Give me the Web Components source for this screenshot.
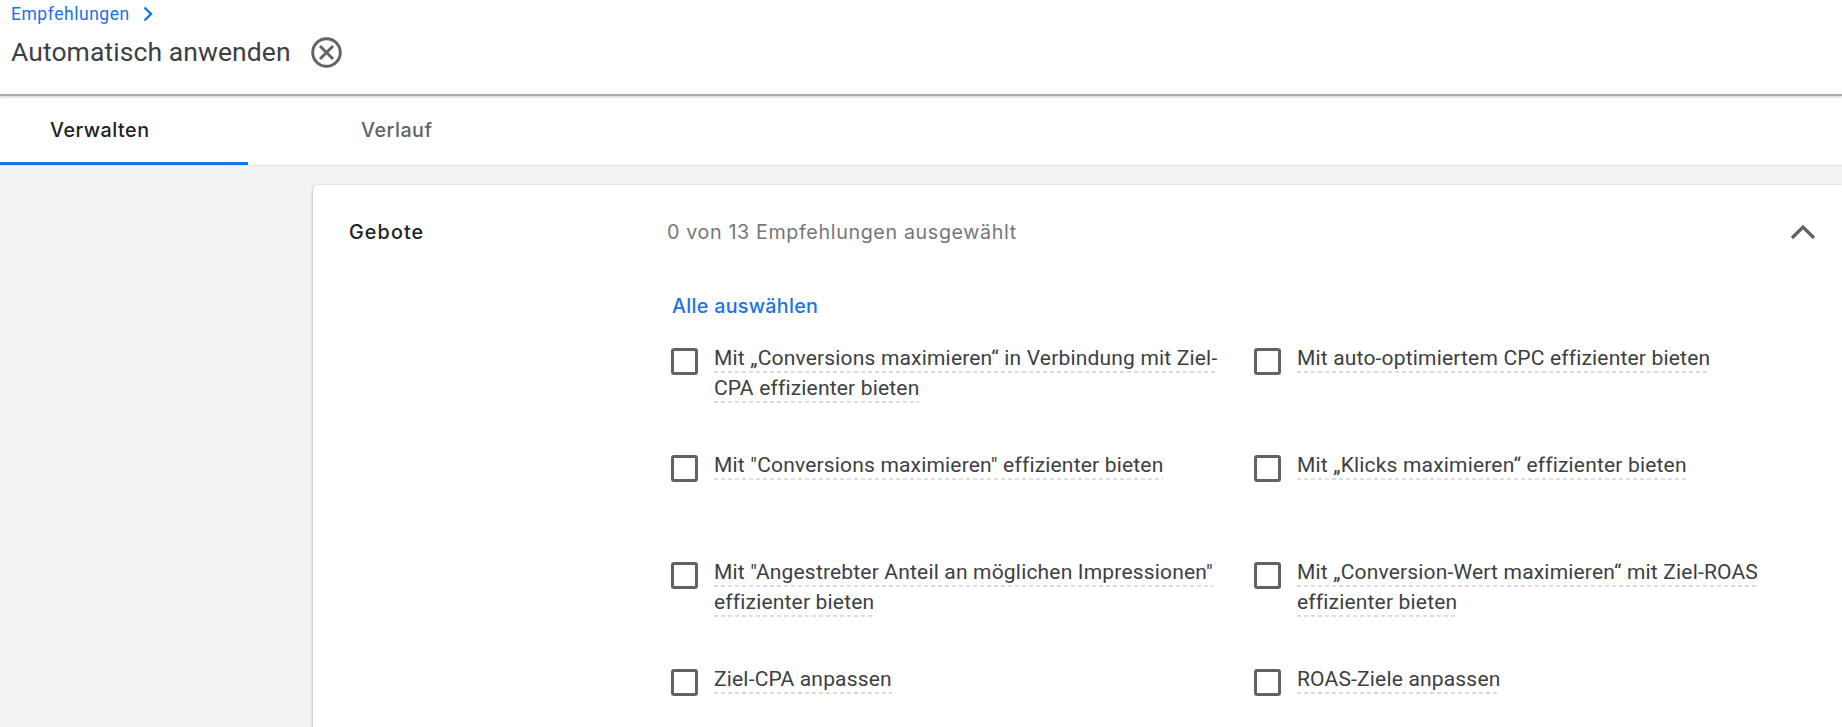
<!DOCTYPE html>
<html lang="de">
<head>
<meta charset="utf-8">
<title>Automatisch anwenden</title>
<style>
  body {
    display: flex;
    flex-direction: column;
    height: 100vh;
    margin: 0;
    background: #f1f3f4;
    font-family: Roboto, "Liberation Sans", sans-serif;
    color: #3c4043;
    overflow: hidden;
  }
</style>
</head>
<body>
<page-header parent="Empfehlungen">Automatisch anwenden</page-header>
<tab-bar>
  <tab-item active>Verwalten</tab-item>
  <tab-item>Verlauf</tab-item>
</tab-bar>
<recommendation-card heading="Gebote" status="0 von 13 Empfehlungen ausgewählt">
  <check-option>Mit „Conversions maximieren“ in Verbindung mit Ziel-<br>CPA effizienter bieten</check-option>
  <check-option>Mit auto-optimiertem CPC effizienter bieten</check-option>
  <check-option>Mit "Conversions maximieren" effizienter bieten</check-option>
  <check-option>Mit „Klicks maximieren“ effizienter bieten</check-option>
  <check-option>Mit "Angestrebter Anteil an möglichen Impressionen"<br>effizienter bieten</check-option>
  <check-option>Mit „Conversion-Wert maximieren“ mit Ziel-ROAS<br>effizienter bieten</check-option>
  <check-option>Ziel-CPA anpassen</check-option>
  <check-option>ROAS-Ziele anpassen</check-option>
</recommendation-card>

<script>
const pageHeaderTemplate = document.createElement("template");
pageHeaderTemplate.innerHTML = `
<style>
:host {
  display: block;
  flex: none;
  position: relative;
  z-index: 1;
  box-sizing: border-box;
  height: 96px;
  padding-left: 11px;
  background: #fff;
  border-bottom: 2px solid #aaabab;
  box-shadow: 0 1px 3px rgba(0,0,0,.2);
}
.crumb {
  display: flex;
  align-items: center;
  gap: 13px;
  height: 28px;
  color: #1a73e8;
  font-size: 17.5px;
  letter-spacing: .54px;
}
.title-row {
  display: flex;
  align-items: center;
  gap: 20px;
  height: 49px;
}
h1 {
  margin: 0;
  padding-bottom: 2px;
  font-size: 26.5px;
  font-weight: 400;
  line-height: 47px;
  letter-spacing: .08px;
}
svg {
  display: block;
  fill: none;
}
</style>
<div class="crumb">
  <span class="parent"></span>
  <svg width="11" height="16" viewBox="0 0 11 16" stroke="#1a73e8" stroke-width="2.4"><path d="M1.5 1.5 8 8 1.5 14.5"/></svg>
</div>
<div class="title-row">
  <h1><slot></slot></h1>
  <svg width="31" height="31" viewBox="0 0 31 31" stroke="#5f6368" stroke-width="2.9"><circle cx="15.5" cy="15.5" r="13.8"/><path d="M9 9 22 22M22 9 9 22"/></svg>
</div>
`;
class PageHeader extends HTMLElement {
  constructor() {
    super();
    const shadow = this.attachShadow({ mode: "open" });
    shadow.appendChild(pageHeaderTemplate.content.cloneNode(true));
    shadow.querySelector(".parent").textContent = this.getAttribute("parent");
  }
}
window.customElements.define("page-header", PageHeader);

const tabBarTemplate = document.createElement("template");
tabBarTemplate.innerHTML = `
<style>
:host {
  display: flex;
  flex: none;
  box-sizing: border-box;
  height: 70px;
  background: #fff;
  border-bottom: 1px solid #dfe1e4;
}
</style>
<slot></slot>
`;
class TabBar extends HTMLElement {
  constructor() {
    super();
    this.attachShadow({ mode: "open" }).appendChild(tabBarTemplate.content.cloneNode(true));
  }
}
window.customElements.define("tab-bar", TabBar);

const tabItemTemplate = document.createElement("template");
tabItemTemplate.innerHTML = `
<style>
:host {
  display: block;
  box-sizing: border-box;
  height: 69px;
  padding-left: 50px;
  width: 248px;
  color: #5f6368;
  font: 500 19.7px/69px Inter, sans-serif;
  letter-spacing: .52px;
}
:host(:not([active])) {
  margin-left: 63px;
}
:host([active]) {
  color: #202124;
  border-bottom: 3px solid #1a73e8;
}
</style>
<slot></slot>
`;
class TabItem extends HTMLElement {
  constructor() {
    super();
    this.attachShadow({ mode: "open" }).appendChild(tabItemTemplate.content.cloneNode(true));
  }
}
window.customElements.define("tab-item", TabItem);

const cardTemplate = document.createElement("template");
cardTemplate.innerHTML = `
<style>
:host {
  display: block;
  flex: 1;
  box-sizing: border-box;
  min-height: 0;
  margin: 19px 0 0 313px;
  padding: 1px 26px 0 36px;
  background: #fff;
  border-radius: 5px 0 0 0;
  box-shadow: 0 1px 3px rgba(60,64,67,.45);
}
.head {
  display: grid;
  grid-template-columns: 318px 1fr 26px;
  align-items: center;
  height: 92px;
  font: 500 19.7px/24px Inter, sans-serif;
}
.heading {
  color: #202124;
  letter-spacing: 1.15px;
}
.status {
  color: #757779;
  font-weight: 400;
  letter-spacing: .63px;
}
.all {
  padding-left: 323px;
  color: #1a73e8;
  font: 500 19.7px/56px Inter, sans-serif;
  letter-spacing: .3px;
}
.options {
  display: grid;
  grid-template-columns: 583px 1fr;
  grid-template-rows: 107px 107px 107px auto;
  padding: 10px 0 0 322px;
}
</style>
<div class="head">
  <span class="heading"></span>
  <span class="status"></span>
  <svg width="26" height="18" viewBox="0 0 26 18" fill="none" stroke="#5f6368" stroke-width="3.2"><path d="M2 15 13 4 24 15"/></svg>
</div>
<div class="all">Alle auswählen</div>
<div class="options"><slot></slot></div>
`;
class RecommendationCard extends HTMLElement {
  constructor() {
    super();
    const shadow = this.attachShadow({ mode: "open" });
    shadow.appendChild(cardTemplate.content.cloneNode(true));
    shadow.querySelector(".heading").textContent = this.getAttribute("heading");
    shadow.querySelector(".status").textContent = this.getAttribute("status");
  }
}
window.customElements.define("recommendation-card", RecommendationCard);

const checkOptionTemplate = document.createElement("template");
checkOptionTemplate.innerHTML = `
<style>
:host {
  display: flex;
  align-items: flex-start;
  gap: 16px;
}
.box {
  flex: none;
  box-sizing: border-box;
  width: 27px;
  height: 27px;
  margin-top: 4px;
  border: 3px solid #5f6368;
  border-radius: 3px;
}
.label {
  font-size: 21px;
  line-height: 29.5px;
  letter-spacing: .18px;
  white-space: nowrap;
}
/* inline background, so that every line gets its own dashes */
.label span {
  padding-bottom: 3px;
  background: repeating-linear-gradient(90deg, #dadce0 0 4px, transparent 4px 7px) 0 100% / 100% 2px no-repeat;
  -webkit-box-decoration-break: clone;
  box-decoration-break: clone;
}
</style>
<div class="box"></div>
<div class="label"><span><slot></slot></span></div>
`;
class CheckOption extends HTMLElement {
  constructor() {
    super();
    this.attachShadow({ mode: "open" }).appendChild(checkOptionTemplate.content.cloneNode(true));
  }
}
window.customElements.define("check-option", CheckOption);
</script>
</body>
</html>
